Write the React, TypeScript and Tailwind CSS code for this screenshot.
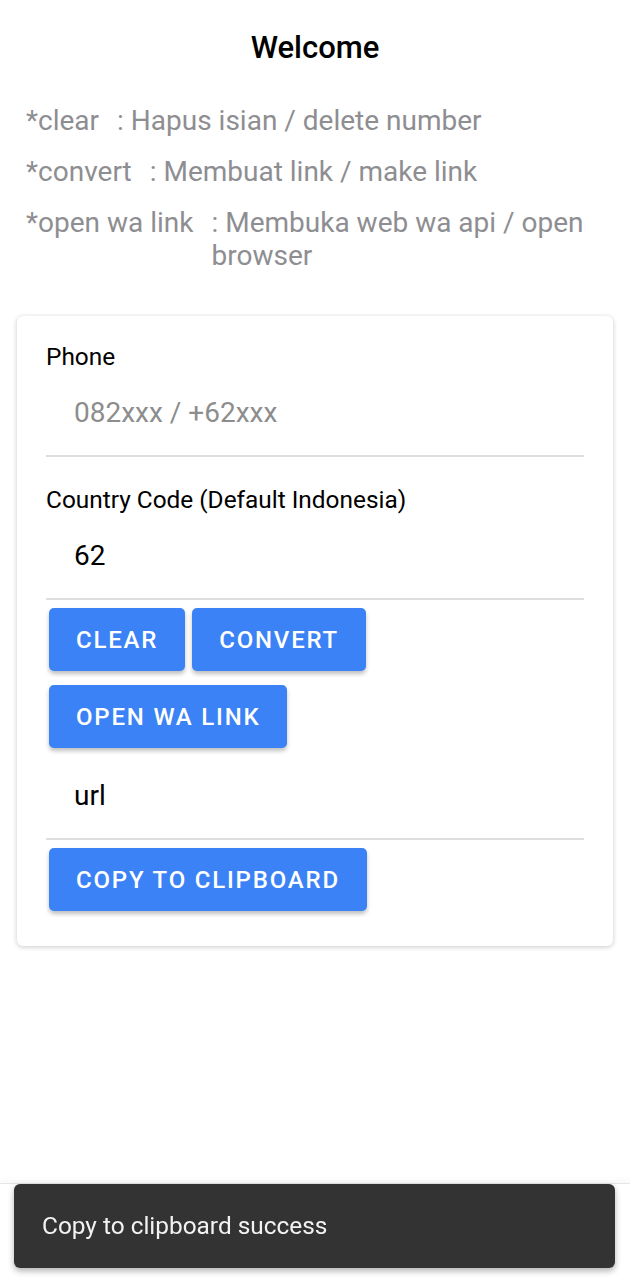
import { useState } from 'react';

const help = [
  { key: '*clear', text: ': Hapus isian / delete number' },
  { key: '*convert', text: ': Membuat link / make link' },
  { key: '*open wa link', text: ': Membuka web wa api / open browser' },
];

function Field({ label, value, placeholder }: { label?: string; value: string; placeholder?: string }) {
  return (
    <div>
      {label && <div className="h-[26px] text-[24.4px] leading-[26px] text-black">{label}</div>}
      <div className="flex h-[87px] items-center border-b-2 border-[#dedede] pl-[28px]">
        <input
          defaultValue={value}
          placeholder={placeholder}
          className="w-full bg-transparent text-[28px] text-black placeholder:text-[#8d8d8d] focus:outline-none"
        />
      </div>
    </div>
  );
}

function Btn({ children }: { children: string }) {
  return (
    <button
      type="button"
      className="h-[63px] rounded-[5px] bg-[#3b82f6] px-[27px] text-[24px] font-medium tracking-[1.8px] text-white shadow-[0_3px_4px_rgba(0,0,0,0.25)]"
    >
      {children}
    </button>
  );
}

export default function App() {
  const [toast] = useState('Copy to clipboard success');

  return (
    <div className="min-h-[1280px] bg-white font-['Roboto',sans-serif]">
      <h1 className="pt-[32px] text-center text-[31px] font-medium leading-[32px] text-black">Welcome</h1>

      <div className="mt-[40px] flex flex-col gap-[18px] px-[26px] text-[28px] leading-[33px] text-[#8e8e92]">
        {help.map((h) => (
          <div key={h.key} className="flex gap-[18px]">
            <span className="shrink-0">{h.key}</span>
            <span>{h.text}</span>
          </div>
        ))}
      </div>

      <div className="mx-[17px] mt-[44px] rounded-[6px] bg-white px-[29px] pb-[35px] pt-[28px] shadow-[0_1px_5px_rgba(0,0,0,0.22)]">
        <Field label="Phone" value="" placeholder="082xxx / +62xxx" />
        <div className="mt-[30px]">
          <Field label="Country Code (Default Indonesia)" value="62" />
        </div>
        <div className="mt-[8px] flex gap-[7px] pl-[3px]">
          <Btn>CLEAR</Btn>
          <Btn>CONVERT</Btn>
        </div>
        <div className="mt-[14px] flex pl-[3px]">
          <Btn>OPEN WA LINK</Btn>
        </div>
        <div className="mt-[5px]">
          <Field value="url" />
        </div>
        <div className="mt-[8px] flex pl-[3px]">
          <Btn>COPY TO CLIPBOARD</Btn>
        </div>
      </div>

      <div className="fixed inset-x-0 bottom-0 h-[97px] border-t border-[#e6e6e6] bg-white shadow-[0_-2px_8px_rgba(0,0,0,0.04)]" />
      <div className="fixed bottom-[12px] left-[14px] right-[15px] flex h-[84px] items-center rounded-[6px] bg-[#333333] pl-[28px] text-[24.4px] text-[#f2f2f2] shadow-[0_3px_6px_rgba(0,0,0,0.3)]">
        {toast}
      </div>
    </div>
  );
}
